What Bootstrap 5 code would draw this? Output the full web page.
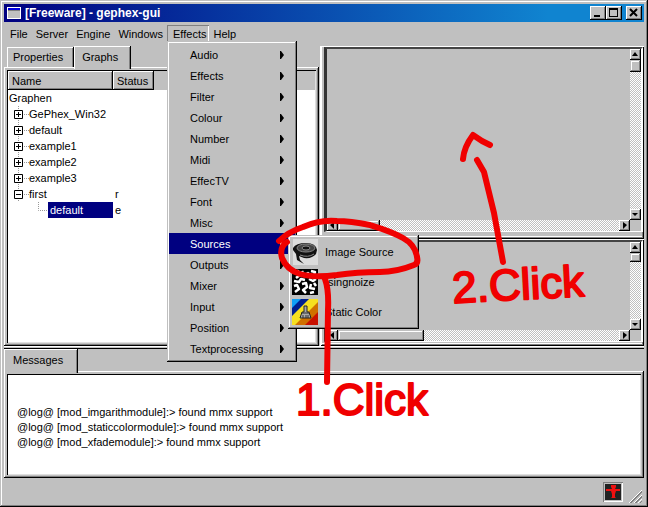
<!DOCTYPE html>
<html lang="en">
<head>
<meta charset="utf-8">
<meta name="viewport" content="width=device-width, initial-scale=1">
<title>[Freeware] - gephex-gui</title>
<link href="https://cdn.jsdelivr.net/npm/bootstrap@5.3.0/dist/css/bootstrap.min.css" rel="stylesheet">
<style>
:root{--face:#c0c0c0;--shade:#808080;--navy:#000080}
body{font:11px/16px "Liberation Sans",Arial,sans-serif;color:#000;background:var(--face)}
button{font:inherit;color:inherit;border:0;border-radius:0;background:var(--face);padding:0}
.app-window{min-height:100vh;padding:4px;box-shadow:inset -1px -1px #000,inset 1px 1px var(--face),inset -2px -2px var(--shade),inset 2px 2px #fff}
.title-bar{height:18px;background:linear-gradient(90deg,#000080,#1084d0 85%);color:#fff;font-size:12px;font-weight:700;padding:0 2px 0 3px}
.title-bar h1{font:inherit;margin:0 0 0 4px}
.win-btn{width:16px;height:14px;box-shadow:inset -1px -1px #000,inset 1px 1px #fff,inset -2px -2px var(--shade)}
.menu-strip{height:24px;padding:3px 0 1px 2px}
.menu-strip>button,.menu-root>button{height:17px;padding:0 4px}
.menu-root>button.opened{box-shadow:inset 1px 1px var(--shade),inset -1px -1px #fff;padding:1px 3px 0 6px}
.raised{background:var(--face);box-shadow:inset -1px -1px #000,inset 1px 1px var(--face),inset -2px -2px var(--shade),inset 2px 2px #fff}
.pop-menu{left:0;top:16px;width:130px;padding:3px 2px;z-index:20}
.pop-menu li{height:21px}
.pop-menu li>button{width:100%;height:21px;padding:0 11px 0 21px;text-align:left}
.pop-menu li>button.chosen{background:var(--navy);color:#fff}
.sub-menu{left:119px;top:2px;width:131px;padding:2px;z-index:21}
.sub-menu li{height:30px}
.pop-menu .sub-menu li{height:30px}
.pop-menu .sub-menu li>button{width:100%;height:30px;padding:0 2px;gap:7px}
.work-area{grid-template-columns:315fr 325fr;min-height:300px}
.tab-btn{height:20px;padding:0 11px 0 6px;box-shadow:inset -1px 0 #000,inset 1px 1px #fff,inset -2px 0 var(--shade)}
.tab-btn.current{height:23px;padding:0 13px 2px 8px;margin-bottom:-2px;z-index:1}
.tab-row{padding-left:3px}
.frame{padding:3px;box-shadow:inset -1px -1px #000,inset 1px 1px #fff,inset -2px -2px var(--shade)}
.sunken{background:#fff;box-shadow:inset 1px 1px #000,inset -1px -1px #dfdfdf;padding:1px}
.tree{border-collapse:collapse;width:100%;line-height:16px}
.tree th{font-weight:400;height:19px;padding:0 4px;background:var(--face);box-shadow:inset -1px -1px #000,inset 1px 1px #fff,inset -2px -2px var(--shade)}
.tree th:last-child{box-shadow:inset 0 -1px var(--face)}
.tree td{height:16px;padding:0 2px;white-space:nowrap}
.tree tbody tr:first-child td{padding:0 1px}
.tree svg{display:block;flex:none}
.col-name{width:105px}.col-status{width:41px}
.picked{background:var(--navy);color:#fff;padding-left:2px}
.views{padding:0 0 0 1px;grid-template-rows:193fr 107fr}
.view-frame{padding:1px 1px 4px 4px;box-shadow:inset 1px 1px #fff,inset -1px -1px #000,inset 2px 0 #fff,inset -2px -2px var(--shade),inset -1px -3px #fff}
.view-frame:first-child{padding-bottom:7px}
.view{border:solid;border-width:2px 2px 1px 3px;border-color:#444 #fff #fff #333;grid-template:1fr 11px / 1fr 11px}
.track{background:repeating-conic-gradient(#fff 0 25%,#c0c0c0 0 50%) 0 0/2px 2px}
.arrow-btn{width:11px;height:11px;flex:none;box-shadow:inset -1px -1px #000,inset 1px 1px #fff,inset -2px -2px var(--shade)}
.arrow-btn svg,.win-btn svg{display:block}
.thumb{flex:none}
.thumb-v{height:12px}.thumb-v2{height:9px}
.thumb-h{width:42px}.thumb-h2{width:86px}
.msg-line{height:3px;border-bottom:1px solid #000;border-top:1px solid #fff}
.log{min-height:101px;padding:31px 10px 23px;line-height:15px;overflow-wrap:anywhere}
.log-tab{height:24px;padding:0 15px 2px 9px;margin-bottom:-2px;position:relative;box-shadow:inset -1px 0 #000,inset 1px 1px #fff,inset -2px 0 var(--shade)}
.status-strip{height:25px;padding:4px 2px 0 0;gap:6px}
.stop-btn{width:20px;height:20px;box-shadow:inset 1px 1px var(--shade),inset -1px -1px #fff;padding:2px}
.ink{left:0;top:0;z-index:30;pointer-events:none;overflow:visible}
.ink path{fill:none;stroke:#f00000;stroke-width:6;stroke-linecap:round;stroke-linejoin:round}
.ink text{font:44px "Liberation Sans",Arial,sans-serif;fill:#f00000;stroke:#f00000;stroke-width:2;stroke-linejoin:round}
</style>
<script src="https://cdn.jsdelivr.net/npm/bootstrap@5.3.0/dist/js/bootstrap.bundle.min.js"></script>
</head>
<body>
<div class="app-window position-relative d-flex flex-column">
<header class="title-bar d-flex align-items-center">
<svg width="14" height="12" aria-hidden="true"><path fill="#fff" d="M0 0h14v12H0z"/><path fill="#808080" d="M1 1h12v10H1z"/><path fill="#c0c0c0" d="M1 4h12v7H1z"/><path fill="#0000e0" d="M1 1h12v2H1z"/></svg>
<h1 class="flex-grow-1">[Freeware] - gephex-gui</h1>
<button class="win-btn" aria-label="Minimize"><svg width="16" height="14"><path d="M4 9h6v2H4z"/></svg></button>
<button class="win-btn me-1" aria-label="Maximize"><svg width="16" height="14"><path fill-rule="evenodd" d="M3 2h9v9H3zM4 4v6h7V4z"/></svg></button>
<button class="win-btn" aria-label="Close"><svg width="16" height="14"><path d="M4 3l7 7M11 3l-7 7" stroke="#000" stroke-width="2"/></svg></button>
</header>
<nav class="menu-strip d-flex">
<button>File</button><button>Server</button><button>Engine</button><button>Windows</button>
<div class="menu-root position-relative"><button class="opened">Effects</button>
<ul class="pop-menu raised position-absolute list-unstyled m-0" id="fx"></ul></div>
<button>Help</button>
</nav>
<main class="work-area d-grid flex-grow-1">
<section class="d-flex flex-column">
<div class="tab-row d-flex align-items-end"><button class="tab-btn">Properties</button><button class="tab-btn current position-relative">Graphs</button></div>
<div class="frame flex-grow-1 d-flex"><div class="sunken flex-grow-1">
<table class="tree"><thead><tr><th class="col-name">Name</th><th class="col-status">Status</th><th></th></tr></thead>
<tbody id="tree"></tbody></table></div></div>
</section>
<section class="views d-grid">
<div class="view-frame d-grid"><div class="view d-grid">
<div></div>
<div class="track d-flex flex-column"><button class="arrow-btn" data-dir="up" aria-label="Scroll up"></button><div class="thumb thumb-v raised"></div><div class="flex-grow-1"></div><button class="arrow-btn" data-dir="down" aria-label="Scroll down"></button></div>
<div class="track d-flex"><button class="arrow-btn" data-dir="left" aria-label="Scroll left"></button><div class="thumb thumb-h raised"></div><div class="flex-grow-1"></div><button class="arrow-btn" data-dir="right" aria-label="Scroll right"></button></div>
</div></div>
<div class="view-frame d-grid"><div class="view d-grid">
<div></div>
<div class="track d-flex flex-column"><button class="arrow-btn" data-dir="up" aria-label="Scroll up"></button><div class="thumb thumb-v2 raised"></div><div class="flex-grow-1"></div><button class="arrow-btn" data-dir="down" aria-label="Scroll down"></button></div>
<div class="track d-flex"><button class="arrow-btn" data-dir="left" aria-label="Scroll left"></button><div class="thumb thumb-h2 raised"></div><div class="flex-grow-1"></div><button class="arrow-btn" data-dir="right" aria-label="Scroll right"></button></div>
</div></div>
</section>
</main>
<div class="msg-line"></div>
<section>
<button class="log-tab d-block">Messages</button>
<div class="frame"><div class="sunken log">@log@ [mod_imgarithmodule]:&gt; found mmx support<br>@log@ [mod_staticcolormodule]:&gt; found mmx support<br>@log@ [mod_xfademodule]:&gt; found mmx support</div></div>
</section>
<footer class="status-strip d-flex justify-content-end">
<button class="stop-btn" aria-label="Stop"><svg class="d-block" width="16" height="16"><path fill="#222" d="M0 0h16v16H0z"/><path fill="#f01010" d="M6 1h5v2l-1 2h5v2h-4l-1 3v3l1 1H6l1-1v-3L6 7H1V5h6L6 3z"/></svg></button>
<svg class="align-self-end" width="13" height="13" aria-hidden="true"><path d="M0 13 13 0M5 13l8-8M9 13l4-4" stroke="#fff"/><path d="M1 13 13 1M2 13 13 2M6 13l7-7M7 13l6-6M11 13l2-2" stroke="#808080"/></svg>
</footer>
<svg class="ink position-absolute" width="648" height="507" aria-label="Instructions">
<path d="M279 241C286 234 294 230 303 227C316 221 326 220 337 221C350 221 360 223 370 225C383 229 393 232 403 238C412 243 416 249 417 257C418 261 417 264 414 265C404 269 394 272 380 272Q357 272 337 275Q313 278 300 274Q287 270 282 258Q279 247 287 242M325 279Q329 290 328 310L327 382"/>
<path d="M463 159Q464 147 473 135L482 141L490 145M477 160L484 172L494 213L503 262"/>
<text x="296" y="415">1.Click</text><text transform="translate(453 303) rotate(-3)">2.Click</text>
</svg>
</div>
<script>
const art={
reel:'<path fill="#dcdcdc" d="M1 0h25v26H1z"/><path fill="#111" d="M1 9Q4 4 14 4t11 7l-1 4q-4 5-12 4l-5-2 1 4 4 4-7-4-1-6-3-4z"/><ellipse cx="14" cy="9" rx="9" ry="4" fill="#444" stroke="#888"/><ellipse cx="14" cy="9" rx="4" ry="2" fill="#111" stroke="#888"/><path d="M8 16q8 3 14-1" fill="none" stroke="#888"/>',
noise:'<path fill="#000" d="M0 0h26v26H0z"/><path fill="none" stroke="#fff" stroke-width="2.500" stroke-linejoin="round" d="M2 3l4-1 2 4-4 3M10 2l2 5 4-3 2 3M19 2l4 1-1 4M2 12l5 1 2-3 4 1M2 17l3-1 2 4-4 3M10 15l4-1 1 4-4 3 3 3M17 10l4 2 3-2M19 15l-1 4 5 1M22 14l2 3M18 24l4-1"/>',
color:'<path fill="#f6e020" d="M0 0h26v26H0z"/><path fill="#10a0f8" d="M0 0h10L0 10z"/><path fill="#002090" d="M9 0h8L0 17V9z"/><path fill="#d07000" d="M26 3v14L17 26H3z"/><path fill="#c81000" d="M26 13v13H13z"/><path fill="#aaa" stroke="#222" d="M12 7h3v6h2l2 6H8l2-6h2z"/><path stroke="#333" d="M10 14h7M11 16v3M14 16v3M16 16v3"/>'};
const arrow='<svg width="4" height="8" aria-hidden="true"><path fill="currentColor" d="M0 0h1l3 4-3 4H0z"/></svg>';
const sub='<ul class="sub-menu raised position-absolute list-unstyled m-0">'+[['reel','Image Source'],['noise','Isingnoize'],['color','Static Color']].map(([k,t])=>`<li><button class="d-flex align-items-center"><svg width="26" height="26" aria-hidden="true">${art[k]}</svg>${t}</button></li>`).join('')+'</ul>';
document.getElementById('fx').innerHTML=['Audio','Effects','Filter','Colour','Number','Midi','EffecTV','Font','Misc','Sources','Outputs','Mixer','Input','Position','Textprocessing'].map(t=>`<li class="position-relative"><button class="d-flex align-items-center justify-content-between${t=='Sources'?' chosen':''}">${t}${arrow}</button>${t=='Sources'?sub:''}</li>`).join('');
const box=p=>`<svg width="19" height="16" aria-hidden="true"><path d="M8.500 0v16M14 8.500h5" stroke="#999" stroke-dasharray="1 1"/><path d="M4.500 4.500h8v8h-8z" fill="#fff" stroke="#000"/><path d="M6 8.500h5${p?'M8.500 6v5':''}" stroke="#000"/></svg>`;
document.getElementById('tree').innerHTML='<tr><td colspan="3">Graphen</td></tr>'+[['GePhex_Win32',1,''],['default',1,''],['example1',1,''],['example2',1,''],['example3',1,''],['first',0,'r']].map(([n,p,s])=>`<tr><td><div class="d-flex">${box(p)}${n}</div></td><td>${s}</td><td></td></tr>`).join('')+'<tr><td class="pe-0"><div class="d-flex"><svg width="38" height="16" aria-hidden="true"><path d="M28.500 0v8.500h9" fill="none" stroke="#999" stroke-dasharray="1 1"/></svg><span class="picked flex-grow-1">default</span></div></td><td>e</td><td></td></tr>';
const tri={up:'M5 3l3 4H2z',down:'M2 4h6L5 7z',left:'M7 2v7L3 5z',right:'M4 2v7l4-4z'};
document.querySelectorAll('[data-dir]').forEach(b=>b.innerHTML=`<svg width="11" height="11"><path d="${tri[b.dataset.dir]}"/></svg>`);
</script>
</body>
</html>
